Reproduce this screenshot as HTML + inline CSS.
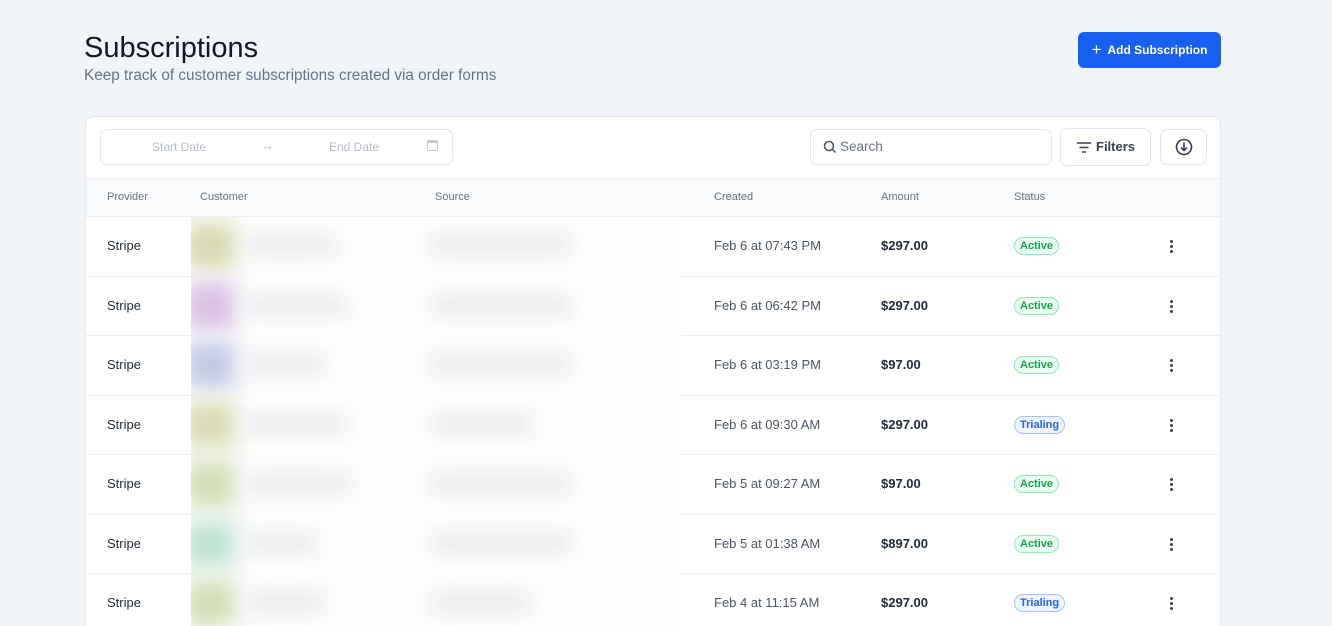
<!DOCTYPE html>
<html style="width:1332px;height:626px;overflow:hidden"><head><meta charset="utf-8"><style>
*{margin:0;padding:0;box-sizing:border-box}
body{width:1332px;height:626px;overflow:hidden;background:#f1f5f9;font-family:"Liberation Sans",sans-serif;position:relative;color:#1f2937}
.abs{position:absolute}
h1{position:absolute;left:84px;top:32px;font-size:29px;font-weight:400;color:#111827}
.sub{left:84px;top:67px;font-size:15.3px;color:#64748b}
.btn{left:1078px;top:32px;width:143px;height:36px;background:#1860f0;border-radius:6px;color:#fff;font-size:12px;font-weight:700;display:flex;align-items:center;justify-content:center;gap:6px}
.card{left:85px;top:116px;width:1136px;height:530px;background:#fff;border:1px solid #e5e7eb;border-radius:8px;overflow:hidden}
.in{border:1px solid #e2e5ea;border-radius:7px;background:#fff}
.th{font-size:11px;color:#6b7280}
.row{position:absolute;left:0;width:1136px;height:60px;border-top:1px solid #eceef2}
.row div{position:absolute;top:0;line-height:58px;font-size:13px}
.badge{display:inline-block;line-height:16px!important;position:static!important;border-radius:9px;font-size:11px!important;padding:0 5px;font-weight:700;vertical-align:1px}
.act{color:#16a34a;background:#ecfdf3;border:1px solid #86efac}
.tri{color:#2563eb;background:#eff4ff;border:1px solid #a5c2fb}
.dots{width:4px}
.dots i{display:block;width:3px;height:3px;background:#374151;border-radius:50%;margin:2px 0}
.blur{position:absolute;filter:blur(10px)}
</style></head><body>
<h1>Subscriptions</h1>
<div class="abs sub">Keep track of customer subscriptions created via order forms</div>
<div class="abs btn"><span style="font-size:17px;font-weight:400">+</span>Add Subscription</div>
<div class="abs card">
 <div class="abs in" style="left:14px;top:12px;width:353px;height:36px">
  <span class="abs" style="left:51px;top:10px;font-size:12px;color:#b6bcc6">Start Date</span>
  <span class="abs" style="left:160px;top:8px;font-size:13px;color:#b6bcc6">→</span>
  <span class="abs" style="left:228px;top:10px;font-size:12px;color:#b6bcc6">End Date</span>
  <span class="abs" style="left:326px;top:10px;width:11px;height:11px;border:1.3px solid #c4c9d1;border-radius:2px;border-top-width:3px"></span>
 </div>
 <div class="abs in" style="left:724px;top:12px;width:242px;height:36px">
  <svg class="abs" style="left:12px;top:10px" width="14" height="14" viewBox="0 0 14 14"><circle cx="6" cy="6" r="4.5" fill="none" stroke="#4b5563" stroke-width="1.5"/><path d="M9.5 9.5L12.5 12.5" stroke="#4b5563" stroke-width="1.5"/></svg>
  <span class="abs" style="left:29px;top:9px;font-size:13.5px;color:#6b7280">Search</span>
 </div>
 <div class="abs in" style="left:974px;top:11px;width:91px;height:38px">
  <svg class="abs" style="left:15px;top:12px" width="16" height="13" viewBox="0 0 16 13"><path d="M1 2H15M3.5 6.5H12.5M6 11H10" stroke="#374151" stroke-width="1.5"/></svg>
  <span class="abs" style="left:35px;top:10px;font-size:13px;font-weight:700;color:#374151">Filters</span>
 </div>
 <div class="abs in" style="left:1074px;top:12px;width:47px;height:36px">
  <svg class="abs" style="left:14px;top:8px" width="18" height="18" viewBox="0 0 18 18"><circle cx="9" cy="9" r="7.5" fill="none" stroke="#374151" stroke-width="1.6"/><path d="M9 4.5V12M6 9.5L9 12.5L12 9.5" fill="none" stroke="#374151" stroke-width="1.6"/></svg>
 </div>
 <div class="abs" style="left:0;top:61px;width:1136px;height:38px;background:#f8fafc;border-top:1px solid #eef0f3"></div>
 <span class="abs th" style="left:21px;top:74px">Provider</span>
 <span class="abs th" style="left:114px;top:74px">Customer</span>
 <span class="abs th" style="left:349px;top:74px">Source</span>
 <span class="abs th" style="left:628px;top:74px">Created</span>
 <span class="abs th" style="left:795px;top:74px">Amount</span>
 <span class="abs th" style="left:928px;top:74px">Status</span>

 <div class="row" style="top:99px"><div style="left:21px">Stripe</div><div style="left:628px;color:#4b5563">Feb 6 at 07:43 PM</div><div style="left:795px;font-weight:700">$297.00</div><div style="left:928px"><span class="badge act">Active</span></div><div class="dots" style="left:1084px;top:21px;line-height:0"><i></i><i></i><i></i></div></div>
 <div class="row" style="top:158.5px"><div style="left:21px">Stripe</div><div style="left:628px;color:#4b5563">Feb 6 at 06:42 PM</div><div style="left:795px;font-weight:700">$297.00</div><div style="left:928px"><span class="badge act">Active</span></div><div class="dots" style="left:1084px;top:21px;line-height:0"><i></i><i></i><i></i></div></div>
 <div class="row" style="top:218px"><div style="left:21px">Stripe</div><div style="left:628px;color:#4b5563">Feb 6 at 03:19 PM</div><div style="left:795px;font-weight:700">$97.00</div><div style="left:928px"><span class="badge act">Active</span></div><div class="dots" style="left:1084px;top:21px;line-height:0"><i></i><i></i><i></i></div></div>
 <div class="row" style="top:277.5px"><div style="left:21px">Stripe</div><div style="left:628px;color:#4b5563">Feb 6 at 09:30 AM</div><div style="left:795px;font-weight:700">$297.00</div><div style="left:928px"><span class="badge tri">Trialing</span></div><div class="dots" style="left:1084px;top:21px;line-height:0"><i></i><i></i><i></i></div></div>
 <div class="row" style="top:337px"><div style="left:21px">Stripe</div><div style="left:628px;color:#4b5563">Feb 5 at 09:27 AM</div><div style="left:795px;font-weight:700">$97.00</div><div style="left:928px"><span class="badge act">Active</span></div><div class="dots" style="left:1084px;top:21px;line-height:0"><i></i><i></i><i></i></div></div>
 <div class="row" style="top:396.5px"><div style="left:21px">Stripe</div><div style="left:628px;color:#4b5563">Feb 5 at 01:38 AM</div><div style="left:795px;font-weight:700">$897.00</div><div style="left:928px"><span class="badge act">Active</span></div><div class="dots" style="left:1084px;top:21px;line-height:0"><i></i><i></i><i></i></div></div>
 <div class="row" style="top:456px"><div style="left:21px">Stripe</div><div style="left:628px;color:#4b5563">Feb 4 at 11:15 AM</div><div style="left:795px;font-weight:700">$297.00</div><div style="left:928px"><span class="badge tri">Trialing</span></div><div class="dots" style="left:1084px;top:21px;line-height:0"><i></i><i></i><i></i></div></div>

 <div class="abs" style="left:105px;top:100px;width:490px;height:430px;background:#fdfdfd;overflow:hidden">
  <div class="blur" style="left:-6px;top:6px;width:50px;height:46px;background:#d8dab0"></div><div class="blur" style="left:55px;top:18px;width:90px;height:20px;background:#e8eaec"></div><div class="blur" style="left:240px;top:18px;width:140px;height:20px;background:#e8eaec"></div>
  <div class="blur" style="left:-6px;top:66px;width:50px;height:46px;background:#dabfe4"></div><div class="blur" style="left:55px;top:78px;width:100px;height:20px;background:#e8eaec"></div><div class="blur" style="left:240px;top:78px;width:140px;height:20px;background:#e8eaec"></div>
  <div class="blur" style="left:-6px;top:125px;width:50px;height:46px;background:#c2c9e6"></div><div class="blur" style="left:55px;top:137px;width:80px;height:20px;background:#e8eaec"></div><div class="blur" style="left:240px;top:137px;width:140px;height:20px;background:#e8eaec"></div>
  <div class="blur" style="left:-6px;top:185px;width:50px;height:46px;background:#dadcb4"></div><div class="blur" style="left:55px;top:197px;width:100px;height:20px;background:#e8eaec"></div><div class="blur" style="left:240px;top:197px;width:100px;height:20px;background:#e8eaec"></div>
  <div class="blur" style="left:-6px;top:244px;width:50px;height:46px;background:#d2dfb6"></div><div class="blur" style="left:55px;top:256px;width:105px;height:20px;background:#e8eaec"></div><div class="blur" style="left:240px;top:256px;width:140px;height:20px;background:#e8eaec"></div>
  <div class="blur" style="left:-6px;top:304px;width:50px;height:46px;background:#bfe3d3"></div><div class="blur" style="left:55px;top:316px;width:70px;height:20px;background:#e8eaec"></div><div class="blur" style="left:240px;top:316px;width:140px;height:20px;background:#e8eaec"></div>
  <div class="blur" style="left:-6px;top:363px;width:50px;height:46px;background:#d2dfb6"></div><div class="blur" style="left:55px;top:375px;width:80px;height:20px;background:#e8eaec"></div><div class="blur" style="left:240px;top:375px;width:100px;height:20px;background:#e8eaec"></div>
 </div>
</div>
</body></html>
